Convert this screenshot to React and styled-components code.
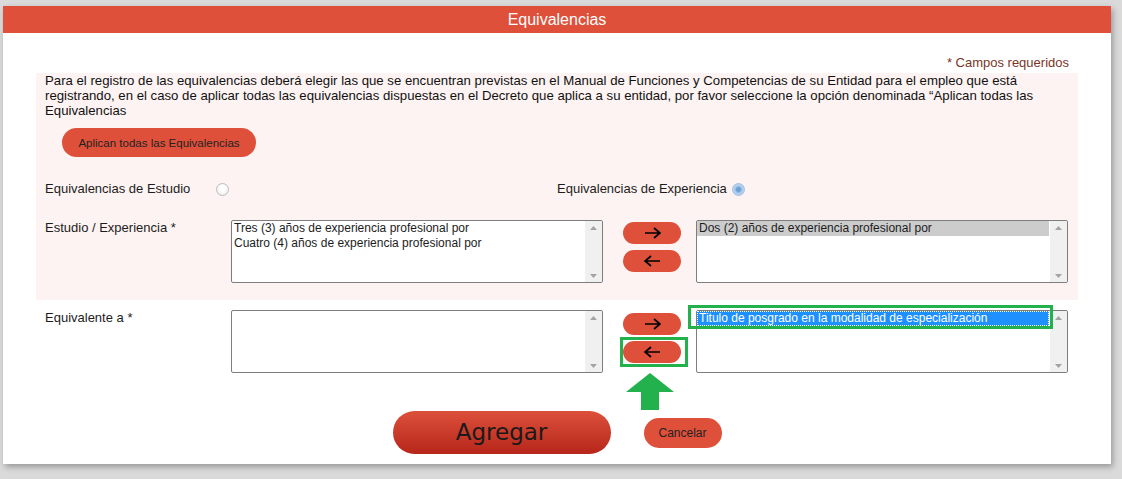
import React from 'react'
import styled, { createGlobalStyle, css } from 'styled-components'

const GlobalStyle = createGlobalStyle`
  body {
    margin: 0;
    background: #dadada;
    font-family: "Liberation Sans", Arial, sans-serif;
    color: #1c1c1c;
  }
`

// -----
// Panel

const Page = styled.div`
  padding: 6px 11px 14px 3px;
`

const Panel = styled.div`
  background: #fff;
  box-shadow: 2px 3px 6px rgba(0, 0, 0, 0.3);
`

const Header = styled.div`
  height: 27px;
  line-height: 27px;
  background: #de503a;
  color: #fff;
  font-size: 16px;
  text-align: center;
`

const Body = styled.div`
  padding: 0 33px 10px 33px;
`

const Required = styled.div`
  padding: 22px 9px 3px 0;
  line-height: 15px;
  font-size: 13px;
  text-align: right;
  color: #7b3526;
`

const Section = styled.div`
  background: #fdf3f2;
  padding: 0 9px 17px 9px;
`

const Intro = styled.p`
  margin: 0;
  font-size: 13.2px;
  line-height: 15px;
  color: #111;
`

const PillButton = styled.button`
  border: none;
  background: #de503a;
  color: #222;
  font-family: "Liberation Sans", Arial, sans-serif;
  font-size: 12px;
  border-radius: 16px;
  padding: 0;
  cursor: pointer;
`

const ApplyButton = styled(PillButton)`
  display: block;
  margin: 10px 0 0 17px;
  width: 194px;
  height: 29px;
  font-size: 11.5px;
`

// ------
// Radios

const RadioRow = styled.div`
  display: grid;
  grid-template-columns: 1fr 1fr;
  margin-top: 24px;
`

const RadioOption = styled.label`
  display: flex;
  align-items: center;
  font-size: 13px;
  line-height: 15px;
  .text {
    min-width: ${(p) => p.$labelWidth || 0}px;
    margin-right: 5px;
  }
`

const RadioDot = styled.span`
  width: 11px;
  height: 11px;
  border-radius: 50%;
  border: 1px solid #bdbdbd;
  background: radial-gradient(circle at 50% 40%, #fff 30%, #e4e4e4 100%);
  margin-top: 2px;
  ${(p) => p.$checked && css`
    border-color: #9ec0e4;
    background: radial-gradient(circle, #6e9fd3 0 25%, #a9c9ec 45%, #cfe1f5 100%);
  `}
`

// -----
// Lists

const FieldRow = styled.div`
  display: grid;
  grid-template-columns: 186px 372px 93px 372px;
  margin-top: ${(p) => p.$top}px;
  padding: ${(p) => (p.$inset ? '0 9px' : '0')};
`

const FieldLabel = styled.div`
  font-size: 13px;
  line-height: 15px;
`

const ListBox = styled.div`
  display: flex;
  height: 61px;
  border: 1px solid #7d7d7d;
  border-radius: 2px;
  background: #fff;
`

const ListItems = styled.div`
  flex: 1;
  padding: 0 1px 0 0;
  font-size: 12px;
  line-height: 15px;
`

const ListItem = styled.div`
  position: relative;
  padding-left: 2px;
  white-space: nowrap;
  ${(p) => p.$state === 'muted' && css`
    background: #cccccc;
  `}
  ${(p) => p.$state === 'active' && css`
    background: #1e90ff;
    color: #fff;
    outline: 1px dotted #fff;
    outline-offset: -1px;
  `}
  ${(p) => p.$marked && css`
    &::after {
      content: '';
      position: absolute;
      left: -9px;
      right: -4px;
      top: -6px;
      bottom: -3px;
      border: 3px solid #22b14c;
    }
  `}
`

const ScrollBar = styled.div`
  width: 17px;
  background: #f0f0f0;
  display: flex;
  flex-direction: column;
  justify-content: space-between;
  align-items: center;
  padding: 5px 0 4px;
  border-radius: 0 2px 2px 0;
  svg { display: block; }
`

const Transfer = styled.div`
  position: relative;
  display: flex;
  flex-direction: column;
  gap: 6px;
  padding: ${(p) => p.$top}px 0 0 20px;
`

const MoveButton = styled(PillButton)`
  position: relative;
  width: 58px;
  height: 22px;
  border-radius: 11px;
  display: flex;
  align-items: center;
  justify-content: center;
  ${(p) => p.$marked && css`
    &::after {
      content: '';
      position: absolute;
      left: -3px;
      right: -7px;
      top: -4px;
      bottom: -4px;
      border: 3px solid #22b14c;
    }
  `}
`

const Pointer = styled.svg`
  position: absolute;
  left: 23px;
  top: 63px;
`

// -------
// Actions

const Actions = styled.div`
  display: flex;
  justify-content: center;
  align-items: center;
  gap: 33px;
  margin-top: 38px;
`

const SubmitButton = styled.button`
  width: 218px;
  height: 43px;
  border: none;
  border-radius: 22px;
  background: linear-gradient(#dc503b, #b6261a);
  color: #1a1a1a;
  font-family: "DejaVu Sans", Verdana, sans-serif;
  font-size: 23px;
  padding: 0 0 2px 0;
`

const CancelButton = styled(PillButton)`
  width: 78px;
  height: 30px;
  border-radius: 15px;
`

const Arrow = ({ dir }) => (
  <svg width='17' height='12' viewBox='0 0 17 12'>
    {dir === 'right'
      ? <path d='M1 6h15M10 1l6 5-6 5' fill='none' stroke='#000' strokeWidth='1.7' />
      : <path d='M16 6H1M7 1L1 6l6 5' fill='none' stroke='#000' strokeWidth='1.7' />}
  </svg>
)

const Scroll = () => (
  <ScrollBar>
    <svg width='7' height='4'><path d='M0 4L3.5 0 7 4z' fill='#a3a3a3' /></svg>
    <svg width='7' height='4'><path d='M0 0L3.5 4 7 0z' fill='#a3a3a3' /></svg>
  </ScrollBar>
)

const List = ({ items = [] }) => (
  <ListBox>
    <ListItems>
      {items.map((item) => (
        <ListItem key={item.text} $state={item.state} $marked={item.marked}>{item.text}</ListItem>
      ))}
    </ListItems>
    <Scroll />
  </ListBox>
)

const sourceItems = [
  { text: 'Tres (3) años de experiencia profesional por' },
  { text: 'Cuatro (4) años de experiencia profesional por' },
]

const chosenItems = [
  { text: 'Dos (2) años de experiencia profesional por', state: 'muted' },
]

const equivalentItems = [
  { text: 'Titulo de posgrado en la modalidad de especialización', state: 'active', marked: true },
]

export default function App() {
  return (
    <Page>
      <GlobalStyle />
      <Panel>
        <Header>Equivalencias</Header>
        <Body>
          <Required>* Campos requeridos</Required>
          <Section>
            <Intro>
              Para el registro de las equivalencias deberá elegir las que se encuentran previstas en el Manual de Funciones y Competencias de su Entidad para el empleo que está registrando, en el caso de aplicar todas las equivalencias dispuestas en el Decreto que aplica a su entidad, por favor seleccione la opción denominada “Aplican todas las Equivalencias
            </Intro>
            <ApplyButton>Aplican todas las Equivalencias</ApplyButton>
            <RadioRow>
              <RadioOption $labelWidth={166}>
                <span className='text'>Equivalencias de Estudio</span>
                <RadioDot />
              </RadioOption>
              <RadioOption>
                <span className='text'>Equivalencias de Experiencia</span>
                <RadioDot $checked />
              </RadioOption>
            </RadioRow>
            <FieldRow $top={24}>
              <FieldLabel>Estudio / Experiencia *</FieldLabel>
              <List items={sourceItems} />
              <Transfer $top={2}>
                <MoveButton><Arrow dir='right' /></MoveButton>
                <MoveButton><Arrow dir='left' /></MoveButton>
              </Transfer>
              <List items={chosenItems} />
            </FieldRow>
          </Section>
          <FieldRow $top={10} $inset>
            <FieldLabel>Equivalente a *</FieldLabel>
            <List />
            <Transfer $top={3}>
              <MoveButton><Arrow dir='right' /></MoveButton>
              <MoveButton $marked><Arrow dir='left' /></MoveButton>
              <Pointer width='48' height='37' viewBox='0 0 48 37'>
                <path d='M24 0L48 19H33V37H15V19H0z' fill='#22b14c' />
              </Pointer>
            </Transfer>
            <List items={equivalentItems} />
          </FieldRow>
          <Actions>
            <SubmitButton>Agregar</SubmitButton>
            <CancelButton>Cancelar</CancelButton>
          </Actions>
        </Body>
      </Panel>
    </Page>
  )
}
